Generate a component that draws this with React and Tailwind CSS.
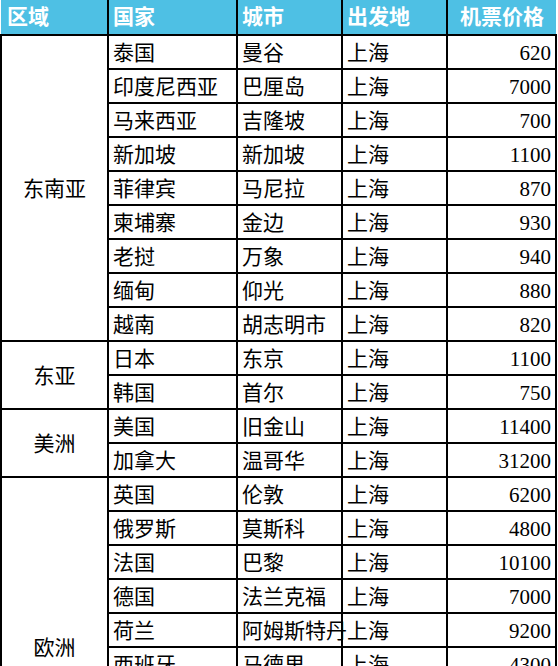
const regions = [
    {
        name: "东南亚",
        rows: [
            ["泰国", "曼谷", "上海", 620],
            ["印度尼西亚", "巴厘岛", "上海", 7000],
            ["马来西亚", "吉隆坡", "上海", 700],
            ["新加坡", "新加坡", "上海", 1100],
            ["菲律宾", "马尼拉", "上海", 870],
            ["柬埔寨", "金边", "上海", 930],
            ["老挝", "万象", "上海", 940],
            ["缅甸", "仰光", "上海", 880],
            ["越南", "胡志明市", "上海", 820],
        ],
    },
    {
        name: "东亚",
        rows: [
            ["日本", "东京", "上海", 1100],
            ["韩国", "首尔", "上海", 750],
        ],
    },
    {
        name: "美洲",
        rows: [
            ["美国", "旧金山", "上海", 11400],
            ["加拿大", "温哥华", "上海", 31200],
        ],
    },
    {
        name: "欧洲",
        rows: [
            ["英国", "伦敦", "上海", 6200],
            ["俄罗斯", "莫斯科", "上海", 4800],
            ["法国", "巴黎", "上海", 10100],
            ["德国", "法兰克福", "上海", 7000],
            ["荷兰", "阿姆斯特丹", "上海", 9200],
            ["西班牙", "马德里", "上海", 4300],
            ["意大利", "罗马", "上海", 5600],
            ["瑞士", "苏黎世", "上海", 6800],
            ["希腊", "雅典", "上海", 5900],
            ["葡萄牙", "里斯本", "上海", 6100],
        ],
    },
]

const font = { fontFamily: '"Liberation Serif", "Noto Sans CJK SC", serif' }

const App = () => {
    return (
        <div className="w-[558px] h-[666px] bg-white overflow-hidden" style={font}>
            <table className="table-fixed border-collapse w-[555px] text-[21px] text-black">
                <colgroup>
                    <col className="w-[107px]" />
                    <col className="w-[129px]" />
                    <col className="w-[105px]" />
                    <col className="w-[105px]" />
                    <col className="w-[109px]" />
                </colgroup>
                <thead className="bg-[#4ec0e4]">
                    <tr className="h-[34px]">
                        <th className="pl-1.5 pt-0.5 text-left font-bold text-white border-r-2 border-black">区域</th>
                        <th className="pl-1 pt-0.5 text-left font-bold text-white border-x-2 border-black">国家</th>
                        <th className="pl-1 pt-0.5 text-left font-bold text-white border-x-2 border-black">城市</th>
                        <th className="pl-1 pt-0.5 text-left font-bold text-white border-x-2 border-black">出发地</th>
                        <th className="pt-0.5 text-center font-bold text-white border-l-2 border-black">机票价格</th>
                    </tr>
                </thead>
                <tbody>
                    {regions.map((region) =>
                        region.rows.map((row, i) => (
                            <tr key={region.name + i} className="h-[34px]">
                                {i === 0 && (
                                    <td
                                        rowSpan={region.rows.length}
                                        className="border-2 border-black pt-1 text-center align-middle"
                                    >
                                        {region.name}
                                    </td>
                                )}
                                <td className="border-2 border-black pl-1 pt-1 whitespace-nowrap leading-none">{row[0]}</td>
                                <td className="border-2 border-black pl-1 pt-1 whitespace-nowrap leading-none">{row[1]}</td>
                                <td className="border-2 border-black pl-1 pt-1 whitespace-nowrap leading-none">{row[2]}</td>
                                <td className="border-2 border-black pr-1 pt-1 text-right whitespace-nowrap leading-none">{row[3]}</td>
                            </tr>
                        ))
                    )}
                </tbody>
            </table>
        </div>
    )
}

export default App
